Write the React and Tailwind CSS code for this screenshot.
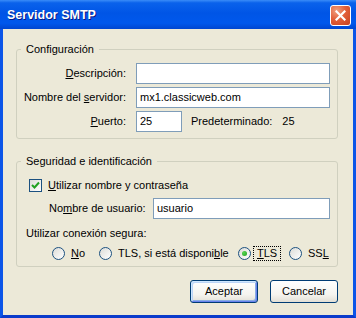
import React from 'react'

const Checkbox = ({ checked }) => (
    <span className="w-[13px] h-[13px] shrink-0 border border-[#1C5180] bg-[linear-gradient(135deg,#DCDCD7_0%,#FFFFFF_100%)] flex items-center justify-center">
        {checked && (
            <svg width="9" height="9" viewBox="0 0 9 9">
                <path d="M1 4 L3.5 6.5 L8 1.5" stroke="#21A121" strokeWidth="2" fill="none" />
            </svg>
        )}
    </span>
)

const Radio = ({ checked }) => (
    <span className="w-[13px] h-[13px] shrink-0 rounded-full border border-[#1C5180] bg-[linear-gradient(135deg,#DCDCD7_0%,#FFFFFF_100%)] flex items-center justify-center">
        {checked && <span className="w-[5px] h-[5px] rounded-full bg-[radial-gradient(circle_at_35%_35%,#55D551,#21A121)]" />}
    </span>
)

const Field = ({ value, className }) => (
    <div className={"h-[21px] border border-[#7F9DB9] bg-white flex items-center px-[3px] " + (className || '')}>
        {value}
    </div>
)

const Button = ({ children, primary }) => (
    <button
        className={
            "w-[68px] h-[23px] rounded-[3px] border border-[#003C74] bg-[linear-gradient(180deg,#FFFFFF_0%,#F5F4EF_65%,#E2DFD5_100%)] text-[11px] " +
            (primary ? "shadow-[inset_1px_1px_0_#CEE7FF,inset_-1px_-1px_0_#6982EE,inset_2px_2px_0_#BCD4F6,inset_-2px_-2px_0_#89ADE4]" : "")
        }
    >
        {children}
    </button>
)

const App = () => {
    return (
        <div className="w-[356px] h-[318px] flex flex-col font-['Liberation_Sans',Arial,sans-serif] text-[11px] text-black">
            <div className="h-[29px] shrink-0 flex justify-between pl-[7px] pr-[5px] bg-[linear-gradient(180deg,#3A8CF8_0%,#0A62EB_10%,#0055E6_45%,#0058EC_80%,#0046D0_100%)]">
                <span className="pt-[7px] text-white font-bold text-[12.5px] leading-[16px] [text-shadow:1px_1px_0_#0A1883]">Servidor SMTP</span>
                <button className="mt-[5px] w-[21px] h-[21px] rounded-[3px] border border-white bg-[radial-gradient(circle_at_30%_25%,#F0A080_0%,#E2603A_45%,#C8401D_100%)] flex items-center justify-center">
                    <svg width="11" height="11" viewBox="0 0 11 11">
                        <path d="M1.5 1.5 L9.5 9.5 M9.5 1.5 L1.5 9.5" stroke="white" strokeWidth="2.2" strokeLinecap="square" />
                    </svg>
                </button>
            </div>
            <div className="flex-1 flex flex-col bg-[#ECE9D8] border-x-[3px] border-b-[3px] border-x-[#0B55E8] border-b-[#0A3BCB] pl-[13px] pt-[13px]">
                <fieldset className="w-[322px] border border-[#D0D0BF] rounded-[3px] pt-[7px] pb-[6px] pr-[7px]">
                    <legend className="ml-[4px] px-[5px] leading-[14px]">Configuración</legend>
                    <div className="grid grid-cols-[109px_1fr] gap-x-[10px] gap-y-[3px] items-center">
                        <span className="text-right"><u>D</u>escripción:</span>
                        <Field value="" />
                        <span className="text-right">Nombre del <u>s</u>ervidor:</span>
                        <Field value="mx1.classicweb.com" />
                        <span className="text-right"><u>P</u>uerto:</span>
                        <div className="flex items-center">
                            <Field value="25" className="w-[46px]" />
                            <span className="ml-[9px]">Predeterminado:</span>
                            <span className="ml-[10px]">25</span>
                        </div>
                    </div>
                </fieldset>

                <fieldset className="mt-[15px] w-[322px] border border-[#D0D0BF] rounded-[3px] pt-[11px] pb-[6px] pr-[7px]">
                    <legend className="ml-[4px] px-[5px] leading-[14px]">Seguridad e identificación</legend>
                    <div className="flex items-center pl-[12px] h-[13px]">
                        <Checkbox checked />
                        <span className="ml-[6px]"><u>U</u>tilizar nombre y contraseña</span>
                    </div>
                    <div className="flex items-center pl-[32px] mt-[6px]">
                        <span className="w-[104px]">No<u>m</u>bre de usuario:</span>
                        <Field value="usuario" className="flex-1" />
                    </div>
                    <div className="pl-[9px] mt-[7px] leading-[14px]">Utilizar conexión segura:</div>
                    <div className="flex items-center pl-[35px] mt-[7px] h-[13px]">
                        <div className="w-[47px] flex items-center">
                            <Radio />
                            <span className="ml-[6px]"><u>N</u>o</span>
                        </div>
                        <div className="w-[139px] flex items-center">
                            <Radio />
                            <span className="ml-[6px]">TLS, si está disponi<u>b</u>le</span>
                        </div>
                        <div className="w-[51px] flex items-center">
                            <Radio checked />
                            <span className="ml-[2px] px-[3px] border border-dotted border-black leading-[13px]"><u>T</u>LS</span>
                        </div>
                        <div className="flex items-center">
                            <Radio />
                            <span className="ml-[6px]">SS<u>L</u></span>
                        </div>
                    </div>
                </fieldset>

                <div className="mt-[13px] w-[322px] flex justify-end gap-[12px]">
                    <Button primary>Aceptar</Button>
                    <Button>Cancelar</Button>
                </div>
            </div>
        </div>
    )
}

export default App
